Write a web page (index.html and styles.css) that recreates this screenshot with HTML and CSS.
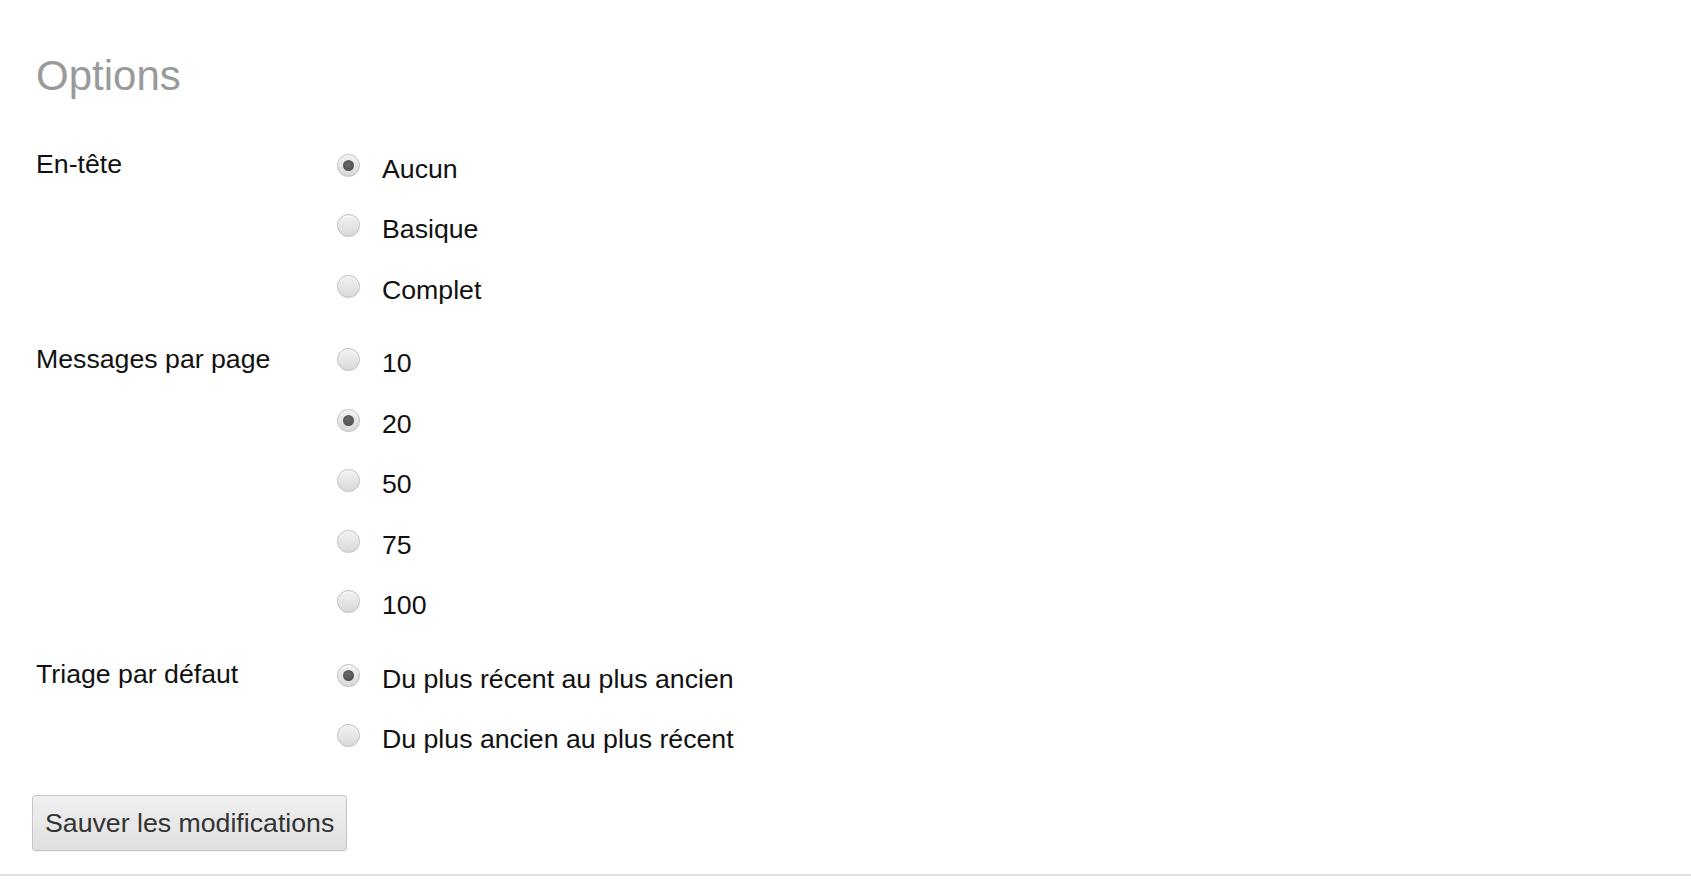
FILE: index.html
```html
<!DOCTYPE html>
<html lang="fr">
<head>
<meta charset="utf-8">
<title>Options</title>
<link rel="stylesheet" href="styles.css">
</head>
<body>
<main class="page">
  <h1 class="title">Options</h1>
  <form class="form">
    <div class="group">
      <div class="label">En-tête</div>
      <div class="options">
        <label class="opt"><input type="radio" name="hdr" checked><span>Aucun</span></label>
        <label class="opt"><input type="radio" name="hdr"><span>Basique</span></label>
        <label class="opt"><input type="radio" name="hdr"><span>Complet</span></label>
      </div>
    </div>
    <div class="group">
      <div class="label">Messages par page</div>
      <div class="options">
        <label class="opt"><input type="radio" name="mpp"><span>10</span></label>
        <label class="opt"><input type="radio" name="mpp" checked><span>20</span></label>
        <label class="opt"><input type="radio" name="mpp"><span>50</span></label>
        <label class="opt"><input type="radio" name="mpp"><span>75</span></label>
        <label class="opt"><input type="radio" name="mpp"><span>100</span></label>
      </div>
    </div>
    <div class="group">
      <div class="label">Triage par défaut</div>
      <div class="options">
        <label class="opt"><input type="radio" name="sort" checked><span>Du plus récent au plus ancien</span></label>
        <label class="opt"><input type="radio" name="sort"><span>Du plus ancien au plus récent</span></label>
      </div>
    </div>
    <div class="actions">
      <button type="button" class="btn">Sauver les modifications</button>
    </div>
  </form>
</main>
<div class="rule"></div>
</body>
</html>
```

FILE: styles.css
```css
html, body {
  margin: 0;
  padding: 0;
  background: #ffffff;
}

body {
  font-family: "Liberation Sans", Arial, sans-serif;
  color: #1a1a1a;
}

.page {
  padding: 52px 0 0 32px;
}

.title {
  margin: 0 0 37px 0;
  padding-left: 4px;
  font-size: 42px;
  line-height: 48px;
  font-weight: normal;
  color: #9a9a9a;
}

.form {
  display: flex;
  flex-direction: column;
  gap: 13px;
}

.group {
  display: grid;
  grid-template-columns: 301px 1fr;
  padding-left: 4px;
}

.label {
  font-size: 26.7px;
  line-height: 60.5px;
  margin-top: -3px;
  color: #111;
}

.options {
  display: flex;
  flex-direction: column;
}

.opt {
  display: flex;
  align-items: center;
  box-sizing: border-box;
  height: 60.5px;
  padding-top: 4px;
  font-size: 26.7px;
  color: #111;
}

.opt input {
  -webkit-appearance: none;
  appearance: none;
  margin: -8px 22px 0 0;
  width: 23px;
  height: 23px;
  border-radius: 50%;
  border: 1px solid #bdbdbd;
  background: linear-gradient(#f2f2f2, #d9d9d9);
  box-shadow: inset 0 1px 1px rgba(255, 255, 255, 0.8);
  position: relative;
  flex: none;
}

.opt input:checked::after {
  content: "";
  position: absolute;
  left: 50%;
  top: 50%;
  width: 11px;
  height: 11px;
  margin: -5.5px 0 0 -5.5px;
  border-radius: 50%;
  background: radial-gradient(circle at 45% 40%, #6a6a6a, #484848);
}

.actions {
  margin-top: 14px;
}

.btn {
  font-family: "Liberation Sans", Arial, sans-serif;
  font-size: 26.7px;
  color: #333;
  height: 56px;
  padding: 0 12px;
  border: 1px solid #c6c6c6;
  border-radius: 3px;
  background: linear-gradient(#f0f0f0, #e0e0e0);
  box-shadow: 0 1px 1px rgba(0, 0, 0, 0.05);
}

.rule {
  margin-top: 23px;
  border-top: 2px solid #e2e2e2;
}
```
